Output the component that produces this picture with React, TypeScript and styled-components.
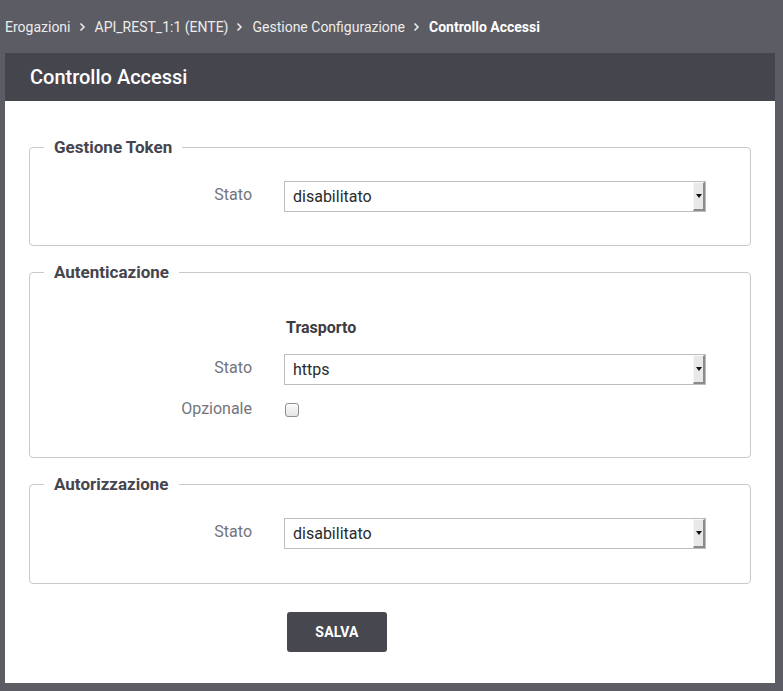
import * as React from 'react'
import styled, { createGlobalStyle } from 'styled-components'

const GlobalStyle = createGlobalStyle`
  html, body {
    margin: 0;
    padding: 0;
    background-color: #5c5c64;
    font-family: 'Roboto', 'Liberation Sans', sans-serif;
  }
`

const Page = styled.div`
  width: 783px;
  min-height: 691px;
  background-color: #5c5c64;
  padding: 0 8px 8px 5px;
  box-sizing: border-box;
`

const Breadcrumb = styled.nav`
  display: flex;
  align-items: center;
  height: 53px;
  font-size: 14px;
  color: #ececec;
`

const Crumb = styled.span<{ current?: boolean }>`
  font-weight: ${(props) => (props.current ? 700 : 400)};
  color: ${(props) => (props.current ? '#ffffff' : '#ececec')};
  white-space: nowrap;
`

const CrumbSep = styled.svg`
  width: 7px;
  height: 10px;
  margin: 0 9px 0 8px;
  flex-shrink: 0;
`

const Panel = styled.section`
  background-color: #ffffff;
`

const PanelHeader = styled.header`
  height: 48px;
  display: flex;
  align-items: center;
  padding-left: 25px;
  background-color: #45454e;
  color: #ffffff;
  font-size: 20px;
  font-weight: 500;
`

const PanelBody = styled.div`
  padding: 36px 24px 31px;
`

const Fieldset = styled.fieldset<{ bottom?: number }>`
  margin: 0 0 16px;
  padding: 24px 0 ${(props) => props.bottom || 32}px;
  border: 1px solid #c9c9c9;
  border-radius: 4px;
  min-width: 0;
`

const Legend = styled.legend`
  margin-left: 14px;
  padding: 0 10px;
  font-size: 17px;
  line-height: 20px;
  font-weight: 700;
  color: #45454e;
`

const Row = styled.div<{ height?: number }>`
  display: grid;
  grid-template-columns: 222px 422px;
  column-gap: 32px;
  align-items: center;
  height: ${(props) => props.height || 31}px;
`

const Label = styled.label`
  text-align: right;
  font-size: 16px;
  color: #74747c;
  padding-bottom: 4px;
`

const SubTitle = styled.div`
  grid-column: 2;
  padding-left: 2px;
  font-size: 16px;
  font-weight: 700;
  color: #3c3c44;
`

const Spacer = styled.div<{ size: number }>`
  height: ${(props) => props.size}px;
`

const SelectBox = styled.div`
  display: flex;
  align-items: stretch;
  height: 31px;
  box-sizing: border-box;
  border: 1px solid #bdbdbd;
  background-color: #ffffff;
`

const SelectValue = styled.div`
  flex: 1;
  display: flex;
  align-items: center;
  padding-left: 8px;
  font-size: 16px;
  color: #2a2a2a;
`

const ArrowButton = styled.div`
  width: 12px;
  display: flex;
  align-items: center;
  justify-content: center;
  box-sizing: border-box;
  background-color: #e8e8e8;
  border-left: 1px solid #f8f8f8;
  border-top: 1px solid #f8f8f8;
  border-right: 2px solid #8a8a8a;
  border-bottom: 2px solid #8a8a8a;
`

const Checkbox = styled.input`
  appearance: none;
  margin: 0 0 0 1px;
  width: 14px;
  height: 14px;
  border: 1px solid #8f8f8f;
  border-radius: 3px;
  background: linear-gradient(#fbfbfb, #e4e4e4);
`

const Actions = styled.div`
  padding: 12px 0 0 258px;
`

const SaveButton = styled.button`
  width: 100px;
  height: 40px;
  border: none;
  border-radius: 3px;
  background-color: #47474f;
  color: #ffffff;
  font-family: 'Roboto', 'Liberation Sans', sans-serif;
  font-size: 14px;
  font-weight: 700;
  letter-spacing: 0.2px;
`

const Chevron = () => (
  <CrumbSep viewBox="0 0 7 10">
    <path d="M1.5 1.5 L5 5 L1.5 8.5" fill="none" stroke="#ececec" strokeWidth="1.6" />
  </CrumbSep>
)

const Select = ({ value }: { value: string }) => (
  <SelectBox>
    <SelectValue>{value}</SelectValue>
    <ArrowButton>
      <svg width="6" height="4" viewBox="0 0 6 4">
        <path d="M0 0 H6 L3 4 Z" fill="#111" />
      </svg>
    </ArrowButton>
  </SelectBox>
)

const App = () => {
  return (
    <Page>
      <GlobalStyle />
      <Breadcrumb>
        <Crumb>Erogazioni</Crumb>
        <Chevron />
        <Crumb>API_REST_1:1 (ENTE)</Crumb>
        <Chevron />
        <Crumb>Gestione Configurazione</Crumb>
        <Chevron />
        <Crumb current>Controllo Accessi</Crumb>
      </Breadcrumb>
      <Panel>
        <PanelHeader>Controllo Accessi</PanelHeader>
        <PanelBody>
          <Fieldset bottom={33}>
            <Legend>Gestione Token</Legend>
            <Row>
              <Label>Stato</Label>
              <Select value="disabilitato" />
            </Row>
          </Fieldset>
          <Fieldset>
            <Legend>Autenticazione</Legend>
            <Spacer size={11} />
            <Row height={20}>
              <SubTitle>Trasporto</SubTitle>
            </Row>
            <Spacer size={17} />
            <Row>
              <Label>Stato</Label>
              <Select value="https" />
            </Row>
            <Spacer size={10} />
            <Row height={30}>
              <Label>Opzionale</Label>
              <Checkbox type="checkbox" />
            </Row>
          </Fieldset>
          <Fieldset bottom={34}>
            <Legend>Autorizzazione</Legend>
            <Row>
              <Label>Stato</Label>
              <Select value="disabilitato" />
            </Row>
          </Fieldset>
          <Actions>
            <SaveButton>SALVA</SaveButton>
          </Actions>
        </PanelBody>
      </Panel>
    </Page>
  )
}

export default App
